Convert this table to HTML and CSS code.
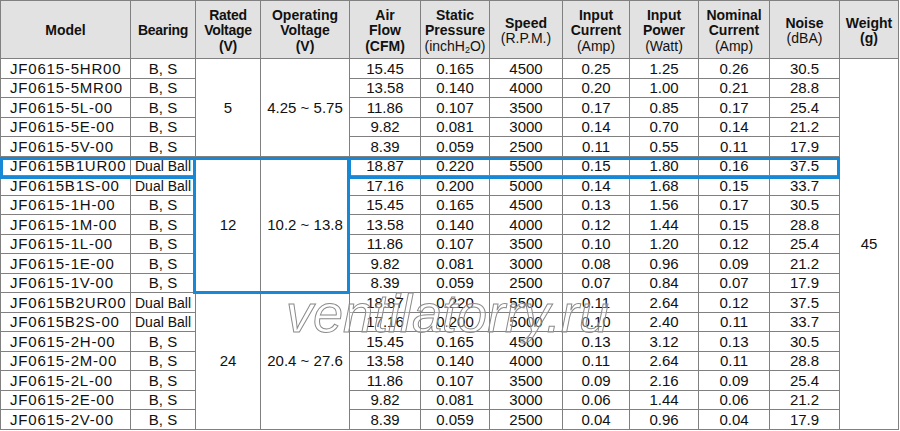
FILE: index.html
```html
<!DOCTYPE html>
<html>
<head>
<meta charset="utf-8">
<title>JF0615 specifications</title>
<link rel="stylesheet" href="styles.css">
</head>
<body>
<div class="sheet">
  <table class="spec">
    <colgroup>
      <col class="c-model"><col class="c-bearing"><col class="c-rated"><col class="c-oper">
      <col class="c-air"><col class="c-static"><col class="c-speed"><col class="c-cur">
      <col class="c-pow"><col class="c-nom"><col class="c-noise"><col class="c-weight">
    </colgroup>
    <thead>
      <tr>
        <th>Model</th>
        <th class="narrow">Bearing</th>
        <th class="narrow">Rated<br>Voltage<br>(V)</th>
        <th>Operating<br>Voltage<br>(V)</th>
        <th>Air<br>Flow<br>(CFM)</th>
        <th>Static<br>Pressure<br><span class="unit">(inchH<sub class="sub">2</sub>O)</span></th>
        <th>Speed<br><span class="unit">(R.P.M.)</span></th>
        <th>Input<br>Current<br><span class="unit">(Amp)</span></th>
        <th>Input<br>Power<br><span class="unit">(Watt)</span></th>
        <th>Nominal<br>Current<br><span class="unit">(Amp)</span></th>
        <th>Noise<br><span class="unit">(dBA)</span></th>
        <th>Weight<br>(g)</th>
      </tr>
    </thead>
    <tbody>
      <tr><td class="model">JF0615-5HR00</td><td>B, S</td><td rowspan="5">5</td><td rowspan="5">4.25 ~ 5.75</td><td>15.45</td><td>0.165</td><td>4500</td><td>0.25</td><td>1.25</td><td>0.26</td><td>30.5</td><td rowspan="19">45</td></tr>
      <tr><td class="model">JF0615-5MR00</td><td>B, S</td><td>13.58</td><td>0.140</td><td>4000</td><td>0.20</td><td>1.00</td><td>0.21</td><td>28.8</td></tr>
      <tr><td class="model">JF0615-5L-00</td><td>B, S</td><td>11.86</td><td>0.107</td><td>3500</td><td>0.17</td><td>0.85</td><td>0.17</td><td>25.4</td></tr>
      <tr><td class="model">JF0615-5E-00</td><td>B, S</td><td>9.82</td><td>0.081</td><td>3000</td><td>0.14</td><td>0.70</td><td>0.14</td><td>21.2</td></tr>
      <tr><td class="model">JF0615-5V-00</td><td>B, S</td><td>8.39</td><td>0.059</td><td>2500</td><td>0.11</td><td>0.55</td><td>0.11</td><td>17.9</td></tr>
      <tr><td class="model">JF0615B1UR00</td><td class="dual">Dual Ball</td><td rowspan="7">12</td><td rowspan="7">10.2 ~ 13.8</td><td>18.87</td><td>0.220</td><td>5500</td><td>0.15</td><td>1.80</td><td>0.16</td><td>37.5</td></tr>
      <tr><td class="model">JF0615B1S-00</td><td class="dual">Dual Ball</td><td>17.16</td><td>0.200</td><td>5000</td><td>0.14</td><td>1.68</td><td>0.15</td><td>33.7</td></tr>
      <tr><td class="model">JF0615-1H-00</td><td>B, S</td><td>15.45</td><td>0.165</td><td>4500</td><td>0.13</td><td>1.56</td><td>0.17</td><td>30.5</td></tr>
      <tr><td class="model">JF0615-1M-00</td><td>B, S</td><td>13.58</td><td>0.140</td><td>4000</td><td>0.12</td><td>1.44</td><td>0.15</td><td>28.8</td></tr>
      <tr><td class="model">JF0615-1L-00</td><td>B, S</td><td>11.86</td><td>0.107</td><td>3500</td><td>0.10</td><td>1.20</td><td>0.12</td><td>25.4</td></tr>
      <tr><td class="model">JF0615-1E-00</td><td>B, S</td><td>9.82</td><td>0.081</td><td>3000</td><td>0.08</td><td>0.96</td><td>0.09</td><td>21.2</td></tr>
      <tr><td class="model">JF0615-1V-00</td><td>B, S</td><td>8.39</td><td>0.059</td><td>2500</td><td>0.07</td><td>0.84</td><td>0.07</td><td>17.9</td></tr>
      <tr><td class="model">JF0615B2UR00</td><td class="dual">Dual Ball</td><td rowspan="7">24</td><td rowspan="7">20.4 ~ 27.6</td><td>18.87</td><td>0.220</td><td>5500</td><td>0.11</td><td>2.64</td><td>0.12</td><td>37.5</td></tr>
      <tr><td class="model">JF0615B2S-00</td><td class="dual">Dual Ball</td><td>17.16</td><td>0.200</td><td>5000</td><td>0.10</td><td>2.40</td><td>0.11</td><td>33.7</td></tr>
      <tr><td class="model">JF0615-2H-00</td><td>B, S</td><td>15.45</td><td>0.165</td><td>4500</td><td>0.13</td><td>3.12</td><td>0.13</td><td>30.5</td></tr>
      <tr><td class="model">JF0615-2M-00</td><td>B, S</td><td>13.58</td><td>0.140</td><td>4000</td><td>0.11</td><td>2.64</td><td>0.11</td><td>28.8</td></tr>
      <tr><td class="model">JF0615-2L-00</td><td>B, S</td><td>11.86</td><td>0.107</td><td>3500</td><td>0.09</td><td>2.16</td><td>0.09</td><td>25.4</td></tr>
      <tr><td class="model">JF0615-2E-00</td><td>B, S</td><td>9.82</td><td>0.081</td><td>3000</td><td>0.06</td><td>1.44</td><td>0.06</td><td>21.2</td></tr>
      <tr><td class="model">JF0615-2V-00</td><td>B, S</td><td>8.39</td><td>0.059</td><td>2500</td><td>0.04</td><td>0.96</td><td>0.04</td><td>17.9</td></tr>
    </tbody>
  </table>
  <div class="hl hl-model"></div>
  <div class="hl hl-volt"></div>
  <div class="hl hl-data"></div>
  <div class="watermark">ventilatorry.ru</div>
</div>
</body>
</html>
```

FILE: styles.css
```css
html, body {
  margin: 0;
  padding: 0;
  background: #ffffff;
}

body {
  font-family: "Liberation Sans", Arial, sans-serif;
  color: #111111;
}

.sheet {
  position: relative;
  width: 900px;
  height: 431px;
  overflow: hidden;
}

.spec {
  border-collapse: collapse;
  table-layout: fixed;
  width: 899px;
}

.c-model { width: 130px; }
.c-bearing { width: 65px; }
.c-rated { width: 65px; }
.c-oper { width: 89px; }
.c-air { width: 71px; }
.c-static { width: 69px; }
.c-speed { width: 73px; }
.c-cur { width: 67px; }
.c-pow { width: 69px; }
.c-nom { width: 71px; }
.c-noise { width: 70px; }
.c-weight { width: 59px; }

.spec th,
.spec td {
  border: 1px solid #808080;
  padding: 0;
  text-align: center;
  vertical-align: middle;
  white-space: nowrap;
  overflow: hidden;
}

.spec thead tr {
  height: 58px;
}

.spec th {
  background: #e2e2e2;
  font-size: 14px;
  font-weight: bold;
  line-height: 15.5px;
  padding-top: 3px;
}

.spec th.narrow {
  letter-spacing: -0.3px;
}

.unit {
  font-weight: normal;
}

.sub {
  font-size: 9px;
  line-height: 0;
  vertical-align: -2px;
}

.spec tbody tr {
  height: 19.5px;
}

.spec td {
  font-size: 15px;
  line-height: 17px;
}

.spec td.model {
  text-align: left;
  padding-left: 9px;
  letter-spacing: 0.8px;
}

.spec td.dual {
  font-size: 14px;
  line-height: 15px;
  padding-top: 2px;
}

.hl {
  position: absolute;
  box-sizing: border-box;
  border: 3px solid #1688d6;
}

.hl-model {
  left: 0;
  top: 157px;
  width: 196px;
  height: 22px;
}

.hl-volt {
  left: 193px;
  top: 157px;
  width: 157px;
  height: 137px;
}

.hl-data {
  left: 348px;
  top: 157px;
  width: 492px;
  height: 22px;
}

.watermark {
  position: absolute;
  left: 286px;
  top: 286px;
  font-family: "Liberation Sans", Arial, sans-serif;
  font-style: italic;
  font-size: 54px;
  line-height: 54px;
  white-space: nowrap;
  color: rgba(255, 255, 255, 0.35);
  -webkit-text-stroke: 1px #8a8a8a;
  pointer-events: none;
}
```
